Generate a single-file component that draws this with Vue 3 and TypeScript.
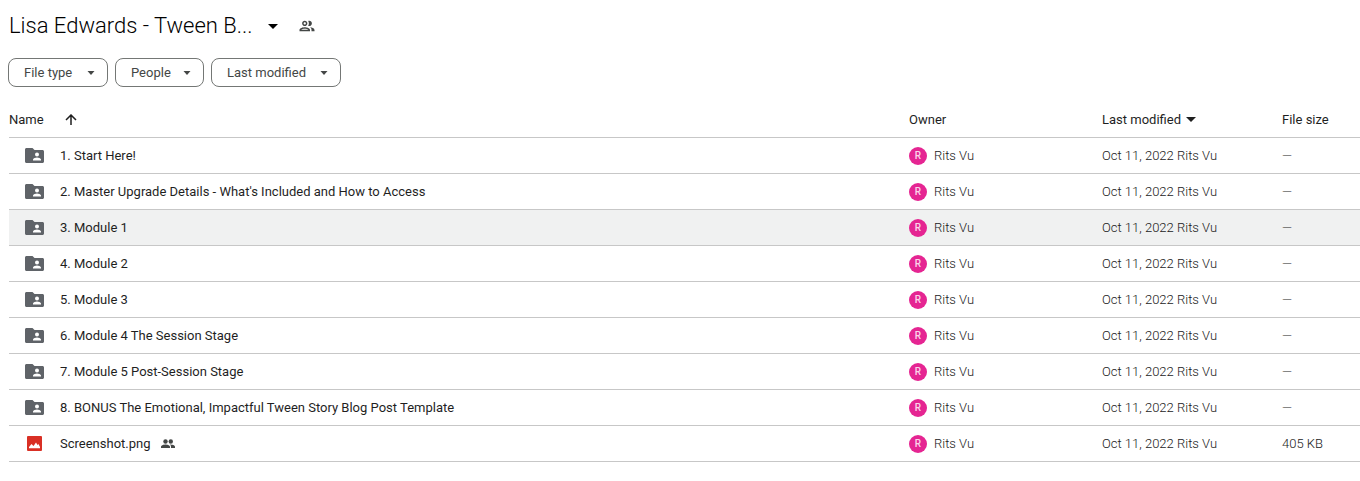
<script setup lang="ts">
interface Entry {
  name: string
  kind: 'folder' | 'image'
  size: string
  shared?: boolean
  hovered?: boolean
}

const owner = 'Rits Vu'
const modified = 'Oct 11, 2022'
const filters: string[] = ['File type', 'People', 'Last modified']

const entries: Entry[] = [
  { name: '1. Start Here!', kind: 'folder', size: '—' },
  { name: "2. Master Upgrade Details - What's Included and How to Access", kind: 'folder', size: '—' },
  { name: '3. Module 1', kind: 'folder', size: '—', hovered: true },
  { name: '4. Module 2', kind: 'folder', size: '—' },
  { name: '5. Module 3', kind: 'folder', size: '—' },
  { name: '6. Module 4 The Session Stage', kind: 'folder', size: '—' },
  { name: '7. Module 5 Post-Session Stage', kind: 'folder', size: '—' },
  { name: '8. BONUS The Emotional, Impactful Tween Story Blog Post Template', kind: 'folder', size: '—' },
  { name: 'Screenshot.png', kind: 'image', size: '405 KB', shared: true },
]
</script>

<template>
  <main class="drive">
    <header class="heading">
      <button class="title" type="button">
        <span>Lisa Edwards - Tween B...</span>
        <svg class="title-caret" viewBox="0 0 10 5" aria-hidden="true"><path d="M0 0h10L5 5z" /></svg>
      </button>
      <button class="share" type="button" aria-label="Manage access">
        <svg viewBox="0 0 24 24" aria-hidden="true">
          <path d="M9 13.75c-2.34 0-7 1.17-7 3.5V19h14v-1.75c0-2.33-4.66-3.5-7-3.5zM4.34 17c.84-.58 2.87-1.25 4.66-1.25s3.82.67 4.66 1.25H4.34zM9 12c1.93 0 3.5-1.57 3.5-3.5S10.93 5 9 5 5.5 6.57 5.5 8.5 7.07 12 9 12zm0-5c.83 0 1.5.67 1.5 1.5S9.83 10 9 10s-1.5-.67-1.5-1.5S8.17 7 9 7zm7.04 6.81c1.16.84 1.96 1.96 1.96 3.44V19h4v-1.75c0-2.02-3.5-3.17-5.96-3.44zM15 12c1.93 0 3.5-1.57 3.5-3.5S16.93 5 15 5c-.54 0-1.04.13-1.5.35.63.89 1 1.98 1 3.15s-.37 2.26-1 3.15c.46.22.96.35 1.5.35z" />
        </svg>
      </button>
    </header>

    <nav class="filters" aria-label="Filters">
      <button v-for="filter in filters" :key="filter" class="chip" type="button">
        <span>{{ filter }}</span>
        <svg viewBox="0 0 8 4" aria-hidden="true"><path d="M.5 0h7L4 4z" /></svg>
      </button>
    </nav>

    <table class="files">
      <thead>
        <tr>
          <th scope="col">
            <div class="head">
              <span>Name</span>
              <button class="sort" type="button" aria-label="Reverse sort direction">
                <svg viewBox="0 0 12 12" aria-hidden="true"><path d="M6 11V1.500M1 6l5-5 5 5" /></svg>
              </button>
            </div>
          </th>
          <th class="col-owner" scope="col">Owner</th>
          <th class="col-modified" scope="col">
            <button class="head-menu" type="button">
              <span>Last modified</span>
              <svg viewBox="0 0 10 5" aria-hidden="true"><path d="M0 0h10L5 5z" /></svg>
            </button>
          </th>
          <th class="col-size" scope="col">File size</th>
        </tr>
      </thead>
      <tbody>
        <tr v-for="entry in entries" :key="entry.name" :class="{ hovered: entry.hovered }">
          <td>
            <div class="name">
              <span class="icon">
                <svg v-if="entry.kind === 'folder'" class="folder" viewBox="0 0 19 15" aria-hidden="true">
                  <path fill="#5f6368" d="M7.500 0H1.500C.7 0 0 .7 0 1.500v12C0 14.300.7 15 1.500 15h16c.8 0 1.500-.7 1.500-1.500V3.500c0-.8-.7-1.500-1.500-1.500H9.500z" />
                  <path fill="#fff" d="M12 4.500a2 2 0 1 1 0 4 2 2 0 0 1 0-4zM8 12.500v-1c0-1.300 2.700-2 4-2s4 .7 4 2v1z" />
                </svg>
                <svg v-else class="image" viewBox="0 0 15 15" aria-hidden="true">
                  <rect width="15" height="15" rx="1" fill="#d93025" />
                  <path fill="#fff" d="M2 12.300V11l2.500-3 2 2 2.500-3.500 1.500 2.500 1-1 1.500 3v1.300z" />
                </svg>
              </span>
              <span>{{ entry.name }}</span>
              <svg v-if="entry.shared" class="people" viewBox="0 0 14 10" role="img" aria-label="Shared">
                <circle cx="4.500" cy="2.500" r="2.200" />
                <circle cx="9.800" cy="2.500" r="2.200" />
                <path d="M0 9V7.800C0 6.300 3 5.500 4.500 5.500S9 6.300 9 7.800V9zM9 5.600c2 0 5 .7 5 2.200V9h-4V7.800c0-1-.4-1.700-1-2.200z" />
              </svg>
            </div>
          </td>
          <td class="meta">
            <div class="owner"><span class="avatar" aria-hidden="true">R</span><span>{{ owner }}</span></div>
          </td>
          <td class="meta">{{ modified }} <span>{{ owner }}</span></td>
          <td class="meta">{{ entry.size }}</td>
        </tr>
      </tbody>
    </table>
  </main>
</template>

<style>
body {
  margin: 0;
  background: #fff;
}
</style>

<style scoped>
.drive {
  padding: 8px 0 16px 9px;
  color: #1f1f1f;
  font-family: Roboto, "Liberation Sans", sans-serif;
  font-size: 13px;
  line-height: 20px;
}

button {
  display: inline-flex;
  align-items: center;
  margin: 0;
  padding: 0;
  border: 0;
  background: none;
  color: inherit;
  font: inherit;
  cursor: pointer;
}

svg {
  display: block;
  flex: none;
  fill: currentColor;
}

.heading {
  display: flex;
  align-items: center;
  gap: 20px;
  height: 36px;
}

.title {
  gap: 15px;
  color: #000;
  font-size: 22px;
  font-weight: 300;
  line-height: 28px;
}

.title-caret,
.head-menu svg {
  width: 10px;
  height: 5px;
}

.share svg {
  width: 18px;
  height: 18px;
  color: #444746;
}

.filters {
  display: grid;
  grid-template-columns: 100px 89px 130px;
  gap: 7px;
  margin: 14px 0 15px -1px;
}

.chip {
  justify-content: space-between;
  box-sizing: border-box;
  height: 29px;
  padding: 0 12px 0 15px;
  border: 1px solid #747775;
  border-radius: 8px;
  color: #444746;
}

.chip svg {
  width: 8px;
  height: 4px;
}

.files {
  width: 100%;
  border-collapse: separate;
  border-spacing: 0;
  table-layout: fixed;
}

.col-owner {
  width: 193px;
}

.col-modified {
  width: 180px;
}

.col-size {
  width: 78px;
}

th,
td {
  box-sizing: border-box;
  height: 36px;
  padding: 0;
  border-bottom: 1px solid #c7c7c7;
  text-align: left;
  vertical-align: middle;
  white-space: nowrap;
}

th {
  font-weight: 400;
}

.meta {
  color: #1a1a1a;
  font-weight: 300;
}

.hovered td {
  background: #f0f1f1;
}

.head {
  display: flex;
  align-items: center;
  gap: 21px;
}

.sort svg {
  width: 12px;
  height: 12px;
  fill: none;
  stroke: #1f1f1f;
  stroke-width: 1.5;
}

.head-menu {
  gap: 5px;
}

.name {
  display: flex;
  align-items: center;
}

.icon {
  display: flex;
  justify-content: center;
  width: 51px;
}

.folder {
  width: 19px;
  height: 15px;
}

.image {
  width: 15px;
  height: 15px;
}

.people {
  width: 14px;
  height: 10px;
  margin-left: 10px;
  color: #444746;
}

.owner {
  display: flex;
  align-items: center;
  gap: 7px;
}

.avatar {
  width: 18px;
  height: 18px;
  border-radius: 50%;
  background: #e52592;
  color: #fbd5ea;
  font-size: 10px;
  font-weight: 500;
  line-height: 18px;
  text-align: center;
}
</style>
